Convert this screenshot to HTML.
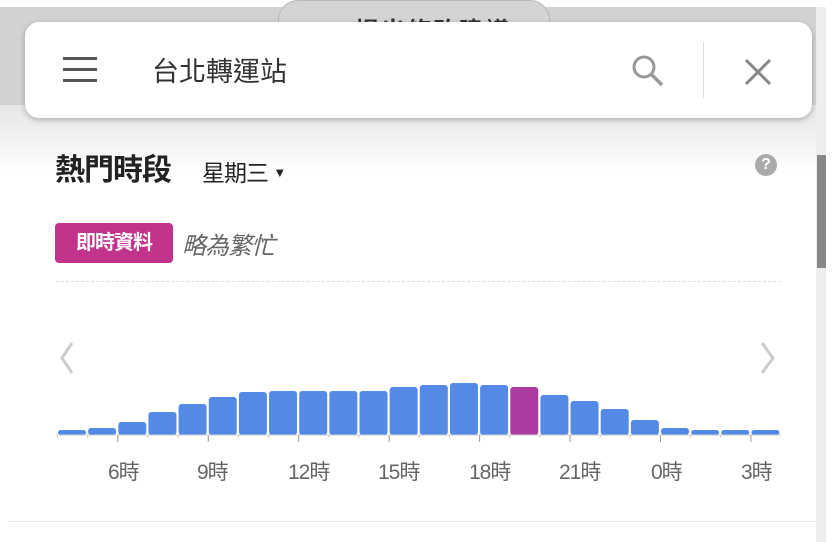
<!DOCTYPE html>
<html><head><meta charset="utf-8"><style>
*{margin:0;padding:0;box-sizing:border-box}
body{width:834px;height:542px;overflow:hidden;background:#fff;position:relative;font-family:"Liberation Sans","Noto Sans CJK TC",sans-serif}
.topgray{position:absolute;left:0;top:7px;width:816px;height:98px;background:#d2d2d2}
.fade{position:absolute;left:0;top:105px;width:816px;height:70px;background:linear-gradient(#e6e6e6,#fff)}
.pill{position:absolute;left:278px;top:0;width:272px;height:40px;border:1px solid #b8b8b8;border-radius:20px;background:#d4d4d4;overflow:hidden}
.pill span{position:absolute;left:76px;top:10px;font-size:24px;font-weight:bold;color:#333;letter-spacing:2px}
.pill i{position:absolute;left:45px;top:22px;width:8px;height:8px;border-radius:50%;background:#3a6fd8}
.card{position:absolute;left:25px;top:22px;width:787px;height:96px;background:#fff;border-radius:14px;box-shadow:0 2px 6px rgba(0,0,0,.25)}
.ham{position:absolute;left:38px;top:35px;width:34px}
.ham b{display:block;height:3px;background:#555;margin-bottom:8px}
.q{position:absolute;left:127px;top:28px;font-size:27px;color:#333}
.sep{position:absolute;left:678px;top:20px;width:1px;height:56px;background:#ddd}
.sb{position:absolute;left:816px;top:7px;width:10px;height:535px;background:#eee}
.thumb{position:absolute;left:817px;top:155px;width:9px;height:113px;background:#888}
.title{position:absolute;left:55px;top:145px;font-size:30px;font-weight:bold;color:#222;letter-spacing:-1px}
.day{position:absolute;left:202px;top:154px;font-size:23px;color:#222;letter-spacing:-1px}
.help{position:absolute;left:755px;top:154px;width:22px;height:22px;border-radius:50%;background:#aaa;color:#fff;font-size:16px;font-weight:bold;text-align:center;line-height:22px}
.badge{position:absolute;left:55px;top:223px;height:40px;width:118px;background:#c2338c;border-radius:4px;color:#fff;font-size:20px;font-weight:bold;line-height:40px;text-align:center;letter-spacing:-1px}
.busy{position:absolute;left:182px;top:226px;font-size:24px;font-style:italic;color:#666;letter-spacing:-1px}
.dash{position:absolute;left:56px;top:281px;width:725px;border-top:1px dashed #ddd}
.bot{position:absolute;left:8px;top:521px;width:808px;border-top:1px solid #e6e6e6}
.lbl{position:absolute;top:456px;font-size:21px;color:#666;letter-spacing:-1px}
</style></head><body>
<div class="topgray"></div><div class="fade"></div>
<div class="pill"><i></i><span>提出修改建議</span></div>
<div class="sb"></div><div class="thumb"></div>
<div class="card">
 <div class="ham"><b></b><b></b><b></b></div>
 <div class="q">台北轉運站</div>
 <svg style="position:absolute;left:606px;top:32px" width="34" height="34" viewBox="0 0 34 34"><circle cx="13" cy="13" r="10" fill="none" stroke="#999" stroke-width="3"/><path d="M20 20 L31 31" stroke="#999" stroke-width="3.5"/></svg>
 <div class="sep"></div>
 <svg style="position:absolute;left:718px;top:35px" width="30" height="30" viewBox="0 0 30 30"><path d="M3 3 L27 27 M27 3 L3 27" stroke="#888" stroke-width="3"/></svg>
</div>
<div class="title">熱門時段</div>
<div class="day">星期三 <span style="font-size:13px;vertical-align:4px">▼</span></div>
<div class="help">?</div>
<div class="badge">即時資料</div>
<div class="busy">略為繁忙</div>
<div class="dash"></div>
<svg style="position:absolute;left:0;top:0" width="834" height="542">
<path d="M72 343 L62 358 L72 373" fill="none" stroke="#ccc" stroke-width="3"/>
<path d="M762 343 L773 358 L762 373" fill="none" stroke="#ccc" stroke-width="3"/>
<g id="bars"></g>
<line x1="56" y1="435" x2="781" y2="435" stroke="#ccc"/>
</svg>
<script>
var t=[430,428,422,412,404,397,392,391,391,391,391,387,385,383,385,387,395,401,409,420,428,430,430,430];
var g=document.getElementById('bars'),s='';
for(var i=0;i<24;i++){var x=57+i*30.15;s+='<rect x="'+(x+1)+'" y="'+t[i]+'" width="28" height="'+(435-t[i])+'" rx="3" fill="'+(i==15?'#ab3b9f':'#5589e6')+'"/>';
 s+='<line x1="'+(x+0.5)+'" y1="435" x2="'+(x+0.5)+'" y2="438" stroke="#ccc"/>';}
var ticks=[2,5,8,11,14,17,20,23];
for(var j=0;j<ticks.length;j++){var x=57+ticks[j]*30.15+0.5;s+='<line x1="'+x+'" y1="435" x2="'+x+'" y2="442" stroke="#999"/>';}
g.innerHTML=s;
</script>
<div class="lbl" style="left:108px">6時</div>
<div class="lbl" style="left:197px">9時</div>
<div class="lbl" style="left:288px">12時</div>
<div class="lbl" style="left:378px">15時</div>
<div class="lbl" style="left:469px">18時</div>
<div class="lbl" style="left:559px">21時</div>
<div class="lbl" style="left:651px">0時</div>
<div class="lbl" style="left:741px">3時</div>
<div class="bot"></div>
</body></html>
